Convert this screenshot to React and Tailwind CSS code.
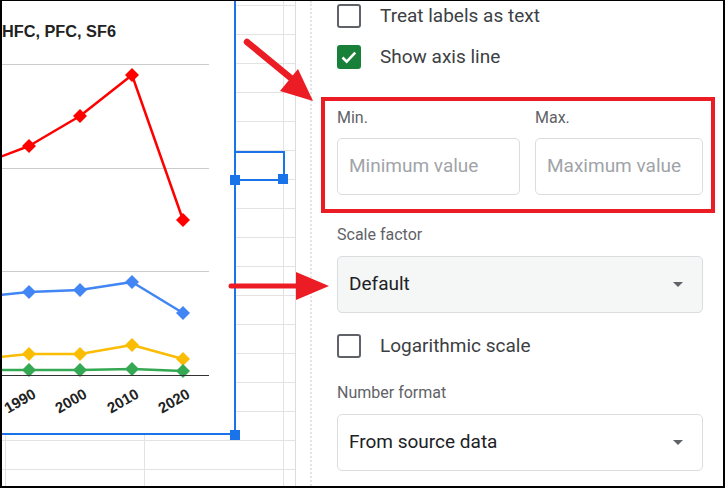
import React from 'react';

const red = [[0, 157], [29, 146], [80, 116], [132, 75], [183, 220]];
const blue = [[0, 295], [29, 292], [80, 290], [132, 282], [183, 313]];
const yellow = [[0, 357], [29, 354], [80, 354], [132, 345], [183, 359]];
const green = [[0, 370], [29, 370], [80, 370], [132, 369], [183, 371]];

const Series = ({ pts, color }) => (
  <g>
    <polyline points={pts.map((p) => p.join(',')).join(' ')} fill="none" stroke={color} strokeWidth="2.5" strokeLinejoin="round" />
    {pts.slice(1).map(([x, y]) => (
      <polygon key={x} points={`${x},${y - 7} ${x + 7},${y} ${x},${y + 7} ${x - 7},${y}`} fill={color} />
    ))}
  </g>
);

const Chart = () => (
  <svg width="232" height="432" viewBox="2 1 232 432" className="block">
    <text x="2" y="37" fontFamily="'Liberation Sans', Arial, sans-serif" fontWeight="bold" fontSize="16.3" fill="#222">
      HFC, PFC, SF6
    </text>
    {[64, 168, 271].map((y) => (
      <line key={y} x1="0" x2="209" y1={y + 0.5} y2={y + 0.5} stroke="#cccccc" />
    ))}
    <Series pts={red} color="#ff0000" />
    <Series pts={blue} color="#4285f4" />
    <Series pts={yellow} color="#fbbc04" />
    <Series pts={green} color="#34a853" />
    <line x1="0" x2="209" y1="375.5" y2="375.5" stroke="#333" />
    {[['1990', 37], ['2000', 88], ['2010', 140], ['2020', 191]].map(([t, x]) => (
      <text
        key={t}
        x={x}
        y="397"
        textAnchor="end"
        transform={`rotate(-30 ${x} 397)`}
        fontFamily="'Liberation Sans', Arial, sans-serif"
        fontWeight="bold"
        fontSize="15"
        fill="#222"
      >
        {t}
      </text>
    ))}
  </svg>
);

const Checkbox = ({ checked }) =>
  checked ? (
    <div className="w-[24px] h-[24px] rounded-[3px] bg-[#188038] flex items-center justify-center">
      <svg width="24" height="24" viewBox="0 0 24 24">
        <path d="M5.5 12.5l4.2 4.2 8.5-9" fill="none" stroke="#fff" strokeWidth="2.6" />
      </svg>
    </div>
  ) : (
    <div className="w-[24px] h-[24px] rounded-[3px] border-2 border-[#5f6368]" />
  );

const CheckRow = ({ checked, label, className }) => (
  <div className={`flex items-center h-[24px] ${className}`}>
    <Checkbox checked={checked} />
    <span className="ml-[19px] text-[19px] text-[#3c4043]">{label}</span>
  </div>
);

const Caret = () => (
  <svg width="10" height="5" viewBox="0 0 10 5">
    <path d="M0 0h10L5 5z" fill="#5f6368" />
  </svg>
);

const Panel = () => (
  <div className="flex-1 border-l-2 border-dotted border-[#e4e4e4] pl-[25px] pr-[20px] font-['Roboto',sans-serif]">
    <CheckRow label="Treat labels as text" className="mt-[3px]" />
    <CheckRow checked label="Show axis line" className="mt-[17px]" />

    <div className="mt-[39px] flex gap-[15px]">
      <div className="w-[183px]">
        <div className="text-[16px] leading-[20px] text-[#5f6368]">Min.</div>
        <div className="mt-[10px] h-[57px] rounded-[5px] border border-[#dadce0] flex items-center pl-[11px] text-[19px] text-[#a0a4a8]">
          Minimum value
        </div>
      </div>
      <div className="flex-1">
        <div className="text-[16px] leading-[20px] text-[#5f6368]">Max.</div>
        <div className="mt-[10px] h-[57px] rounded-[5px] border border-[#dadce0] flex items-center pl-[11px] text-[19px] text-[#a0a4a8]">
          Maximum value
        </div>
      </div>
    </div>

    <div className="mt-[30px] text-[16px] leading-[20px] text-[#5f6368]">Scale factor</div>
    <div className="mt-[11px] h-[57px] rounded-[5px] border border-[#dadce0] bg-[#f5f6f6] flex items-center justify-between pl-[11px] pr-[19px] text-[19px] text-[#202124]">
      <span>Default</span>
      <Caret />
    </div>

    <CheckRow label="Logarithmic scale" className="mt-[21px]" />

    <div className="mt-[25px] text-[16px] leading-[20px] text-[#5f6368]">Number format</div>
    <div className="mt-[11px] h-[57px] rounded-[5px] border border-[#dadce0] bg-white flex items-center justify-between pl-[11px] pr-[19px] text-[19px] text-[#202124]">
      <span>From source data</span>
      <Caret />
    </div>
  </div>
);

export default function App() {
  return (
    <div className="relative w-[725px] h-[488px] overflow-hidden bg-white border-black border-x-2 border-b-2 border-t flex">
      {/* sheet with the chart on top */}
      <div className="w-[294px] mr-[14px] border-r border-[#dcdcdc] bg-[linear-gradient(#e3e3e3_1px,transparent_1px),linear-gradient(90deg,#e3e3e3_1px,transparent_1px)] bg-[length:139px_29px] bg-[position:3px_4px]">
        <div className="w-[234px] h-[434px] bg-white border-r-2 border-b-2 border-[#1a73e8]">
          <Chart />
        </div>
      </div>

      <Panel />

      {/* selection marks */}
      <div className="absolute left-[232px] top-[150px] w-[51px] h-[30px] border-t-2 border-r-2 border-b-2 border-[#1a73e8]" />
      <div className="absolute left-[228px] top-[174px] w-[10px] h-[10px] bg-[#1a73e8]" />
      <div className="absolute left-[276px] top-[173px] w-[10px] h-[10px] bg-[#1a73e8]" />
      <div className="absolute left-[228px] top-[429px] w-[10px] h-[10px] bg-[#1a73e8]" />

      {/* red annotation box */}
      <div className="absolute left-[319px] top-[96px] w-[394px] h-[116px] border-4 border-[#ec1c24]" />

      {/* arrows */}
      <svg className="absolute left-[-2px] top-[-1px]" width="725" height="488" viewBox="0 0 725 488">
        <line x1="247" y1="42" x2="292" y2="79" stroke="#ec1c24" strokeWidth="6.5" strokeLinecap="round" />
        <polygon points="280,91 298,69 313,101" fill="#ec1c24" />
        <line x1="231" y1="286" x2="300" y2="286" stroke="#ec1c24" strokeWidth="5" strokeLinecap="round" />
        <polygon points="296,272 296,300 329,286" fill="#ec1c24" />
      </svg>
    </div>
  );
}
